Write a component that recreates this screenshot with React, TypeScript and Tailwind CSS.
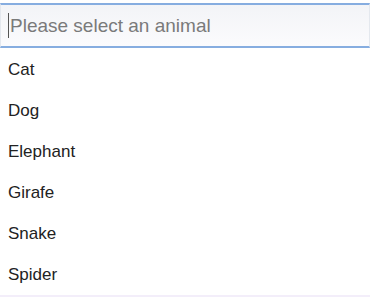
import React from "react";

const animals = ["Cat", "Dog", "Elephant", "Girafe", "Snake", "Spider"];

function AnimalSelect() {
    const [value, setValue] = React.useState("");

    return (
        <div className="bg-white" style={{ fontFamily: '"Liberation Sans", Arial, sans-serif' }}>
            <div className="pt-[3px] bg-white">
                <div className="h-[45px] flex items-center border-y-2 border-[#86ade0] border-x border-x-[#e4e8ee] bg-gradient-to-b from-[#f3f4f7] to-[#fbfbfd] pl-[7px]">
                    <span className="w-px h-[25px] bg-[#555] mr-px"></span>
                    <span className="text-[19px] text-[#7a7a7a] leading-none">{value || "Please select an animal"}</span>
                </div>
            </div>
            <ul className="bg-white pt-px">
                {animals.map((a) => (
                    <li
                        key={a}
                        onClick={() => setValue(a)}
                        className="h-[41px] flex items-center pl-[8px] pt-px text-[17px] text-[#222] cursor-pointer hover:bg-gray-100"
                    >
                        {a}
                    </li>
                ))}
            </ul>
        </div>
    );
}

export default function App() {
    return (
        <div className="min-h-screen bg-[#f3eefa]">
            <AnimalSelect />
        </div>
    );
}
